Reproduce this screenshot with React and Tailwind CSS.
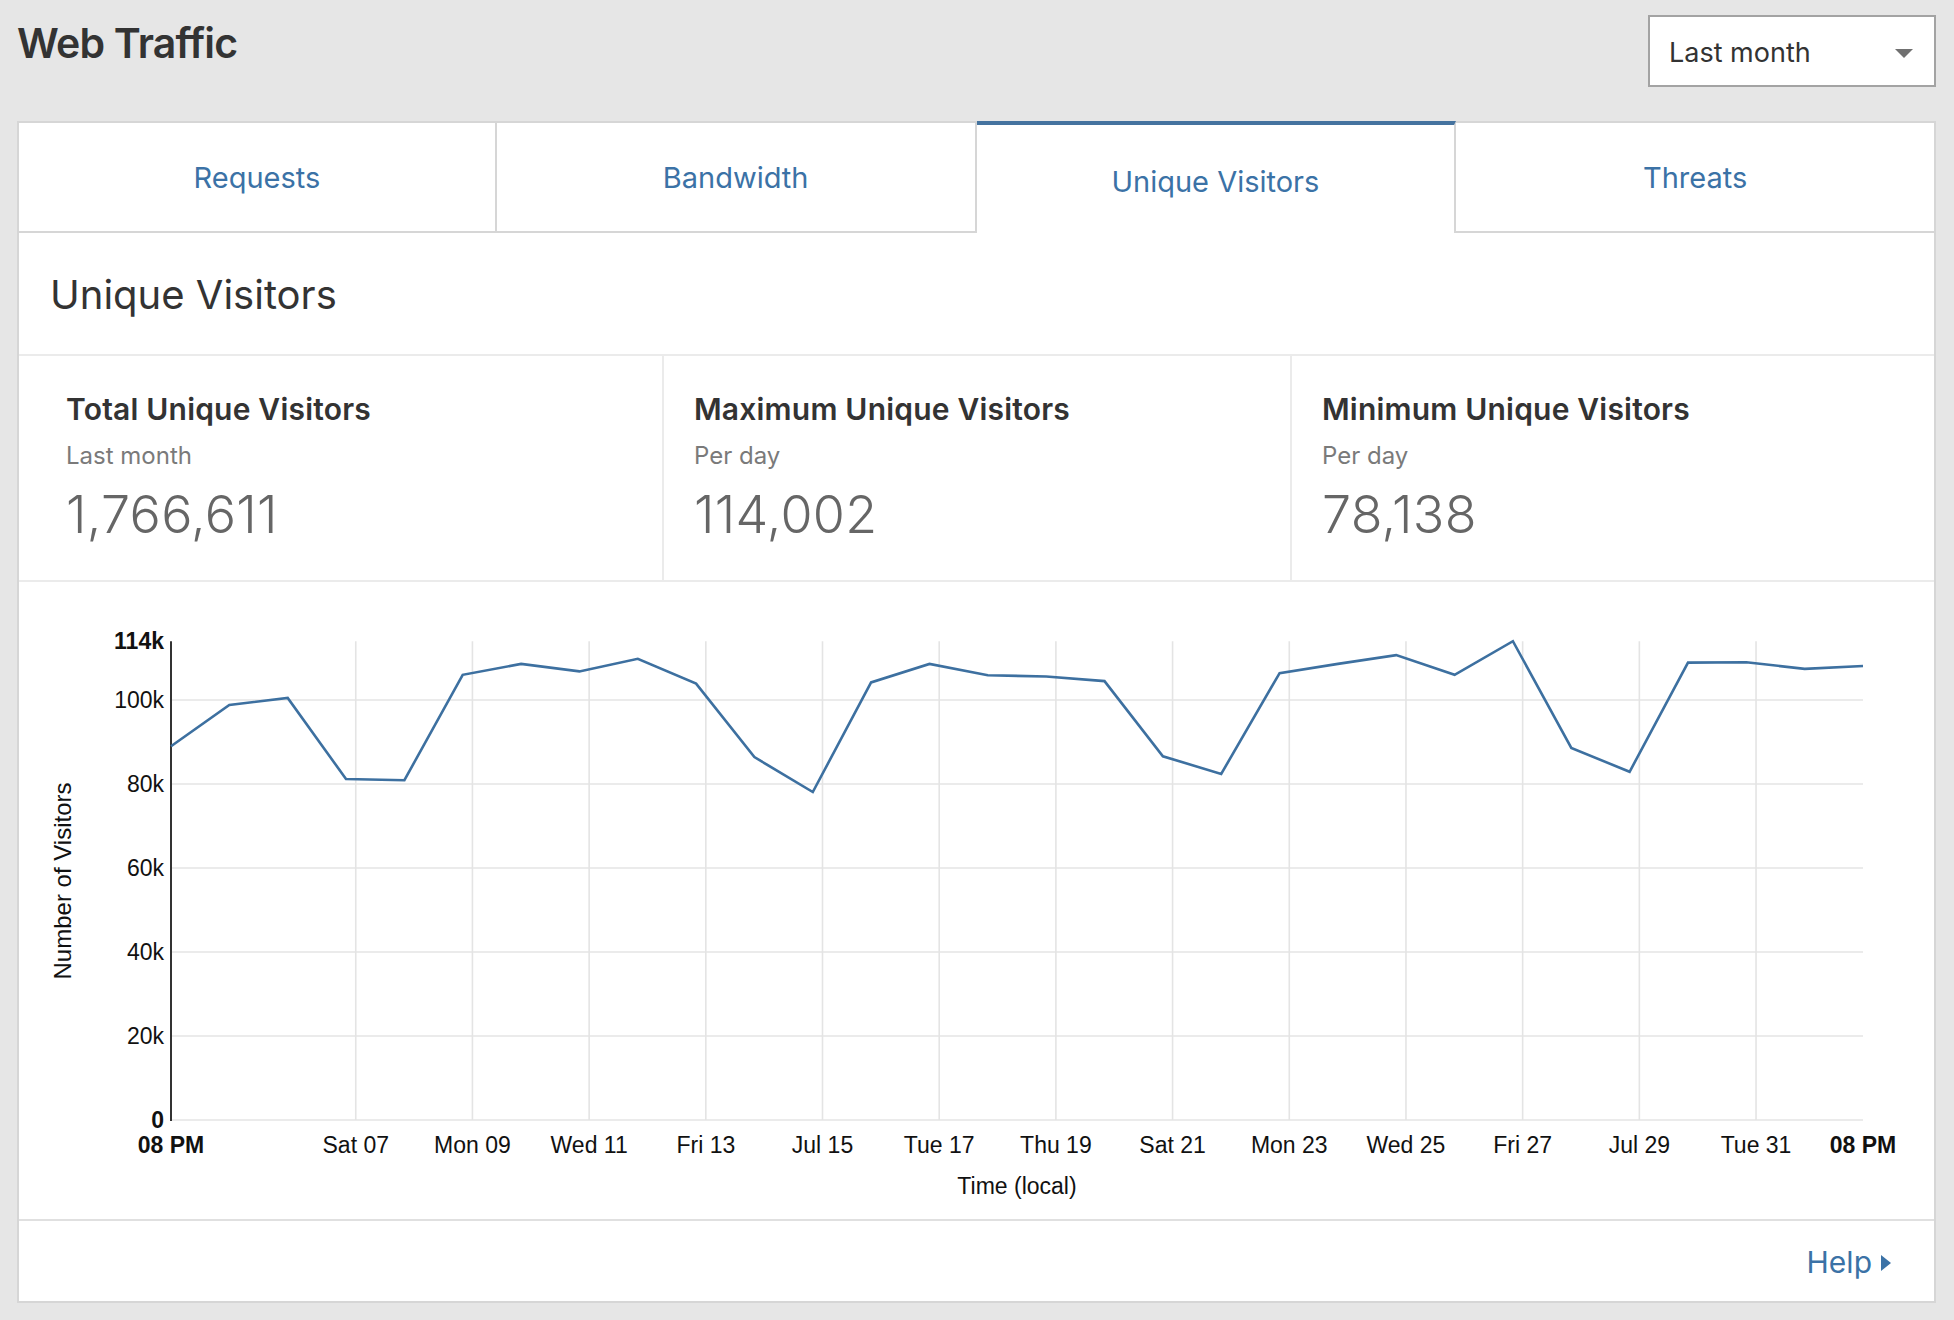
import React from "react";

const VALUES = [89.0, 98.8, 100.5, 81.2, 80.9, 106.0, 108.6, 106.8, 109.8, 103.9, 86.4, 78.1, 104.2, 108.6, 105.9, 105.6, 104.5, 86.6, 82.4, 106.4, 108.6, 110.7, 106.0, 114.0, 88.6, 82.9, 108.9, 109.0, 107.4, 108.1];
const X0 = 152;
const X1 = 1844;
const Y0 = 538;
const PXK = 4.2;
const DAY = (X1 - X0) / 29;
const LABELS = ["Sat 07", "Mon 09", "Wed 11", "Fri 13", "Jul 15", "Tue 17", "Thu 19", "Sat 21", "Mon 23", "Wed 25", "Fri 27", "Jul 29", "Tue 31"];
const YTICKS = [0, 20, 40, 60, 80, 100];

function Chart() {
  const pts = VALUES.map((v, i) => `${(X0 + i * DAY).toFixed(1)},${(Y0 - v * PXK).toFixed(1)}`).join(" ");
  const gx = LABELS.map((_, j) => X0 + (3 + 4 / 24 + 2 * j) * DAY);
  const top = Y0 - 114 * PXK;
  return (
    <svg width="1917" height="639" viewBox="0 0 1917 639" className="block" style={{ fontFamily: '"Liberation Sans", Arial, sans-serif' }}>
      {YTICKS.map((t) => (
        <line key={"h" + t} x1={X0} x2={X1} y1={Y0 - t * PXK} y2={Y0 - t * PXK} stroke="#e4e4e4" strokeWidth="1.6" />
      ))}
      {gx.map((x, j) => (
        <line key={"v" + j} x1={x} x2={x} y1={top} y2={Y0} stroke="#e4e4e4" strokeWidth="1.6" />
      ))}
      <line x1={X0} x2={X0} y1={top} y2={Y0 + 1} stroke="#333" strokeWidth="2" />
      <polyline points={pts} fill="none" stroke="#3d70a0" strokeWidth="2.6" strokeLinejoin="miter" />
      {YTICKS.map((t) => (
        <text key={"yl" + t} x={145} y={Y0 - t * PXK + 8} textAnchor="end" fontSize="23" fill="#111" fontWeight={t === 0 ? 700 : 400}>
          {t === 0 ? "0" : `${t}k`}
        </text>
      ))}
      <text x={145} y={top + 8} textAnchor="end" fontSize="23" fill="#111" fontWeight="700">114k</text>
      <text x={X0} y={571} textAnchor="middle" fontSize="23" fill="#111" fontWeight="700">08 PM</text>
      <text x={X1} y={571} textAnchor="middle" fontSize="23" fill="#111" fontWeight="700">08 PM</text>
      {LABELS.map((l, j) => (
        <text key={l} x={gx[j]} y={571} textAnchor="middle" fontSize="23" fill="#111">{l}</text>
      ))}
      <text x={998} y={612} textAnchor="middle" fontSize="23" fill="#111">Time (local)</text>
      <text transform="translate(52,299) rotate(-90)" textAnchor="middle" fontSize="24" fill="#111">Number of Visitors</text>
    </svg>
  );
}

function Stat({ title, sub, value, className }) {
  return (
    <div className={className}>
      <div className="text-[30px] leading-none font-semibold text-[#333] pt-[38px] tracking-[0.2px]">{title}</div>
      <div className="text-[24px] leading-none text-[#7a7a7a] mt-[20px]">{sub}</div>
      <div className="text-[52px] leading-none font-light text-[#666] mt-[21px] tracking-[0.3px]">{value}</div>
    </div>
  );
}

export default function App() {
  return (
    <div className="w-[1954px] h-[1320px] bg-[#e6e6e6] font-['Inter',_'Roboto',_sans-serif] overflow-hidden">
      <div className="flex justify-between items-start h-[121px] pl-[17px] pr-[18px]">
        <h1 className="mt-[23px] text-[41px] leading-none font-semibold text-[#333] tracking-[-0.8px]">Web Traffic</h1>
        <div className="mt-[15px] w-[288px] h-[72px] bg-white border-2 border-[#a3a3a3] flex items-center justify-between pl-[19px] pr-[21px]">
          <span className="text-[27px] text-[#333] mt-[4px]">Last month</span>
          <span className="w-0 h-0 border-l-[9px] border-r-[9px] border-t-[9px] border-l-transparent border-r-transparent border-t-[#707070] mt-[4px]" />
        </div>
      </div>
      <div className="ml-[17px] w-[1919px]">
        <div className="grid grid-cols-4 h-[112px]">
          <div className="bg-white border-2 border-[#d6d6d6] flex items-center justify-center pt-[2px] text-[29px] text-[#3b72a6]">Requests</div>
          <div className="bg-white border-y-2 border-r-2 border-[#d6d6d6] flex items-center justify-center pt-[2px] text-[29px] text-[#3b72a6]">Bandwidth</div>
          <div className="bg-white border-t-4 border-t-[#45739f] border-r-2 border-r-[#d6d6d6] flex items-center justify-center pt-[6px] text-[29px] text-[#3b72a6]">Unique Visitors</div>
          <div className="bg-white border-y-2 border-r-2 border-[#d6d6d6] flex items-center justify-center pt-[2px] text-[29px] text-[#3b72a6]">Threats</div>
        </div>
        <div className="bg-white border-x-2 border-b-2 border-[#d6d6d6]">
          <div className="h-[123px] flex items-center pl-[31px] pt-[3px] border-b-2 border-[#ebebeb]">
            <h2 className="text-[40px] leading-none text-[#333]">Unique Visitors</h2>
          </div>
          <div className="grid grid-cols-[645px_628px_1fr] h-[226px] border-b-2 border-[#ebebeb]">
            <Stat className="pl-[47px] border-r-2 border-[#ebebeb]" title="Total Unique Visitors" sub="Last month" value="1,766,611" />
            <Stat className="pl-[30px] border-r-2 border-[#ebebeb]" title="Maximum Unique Visitors" sub="Per day" value="114,002" />
            <Stat className="pl-[30px]" title="Minimum Unique Visitors" sub="Per day" value="78,138" />
          </div>
          <div className="h-[639px] border-b-2 border-[#e0e0e0]">
            <Chart />
          </div>
          <div className="h-[80px] flex items-center justify-end pr-[43px] pt-[3px]">
            <span className="text-[30px] text-[#3b72a6]">Help</span>
            <span className="ml-[9px] w-0 h-0 border-t-[8px] border-b-[8px] border-l-[10px] border-t-transparent border-b-transparent border-l-[#3b72a6]" />
          </div>
        </div>
      </div>
    </div>
  );
}
